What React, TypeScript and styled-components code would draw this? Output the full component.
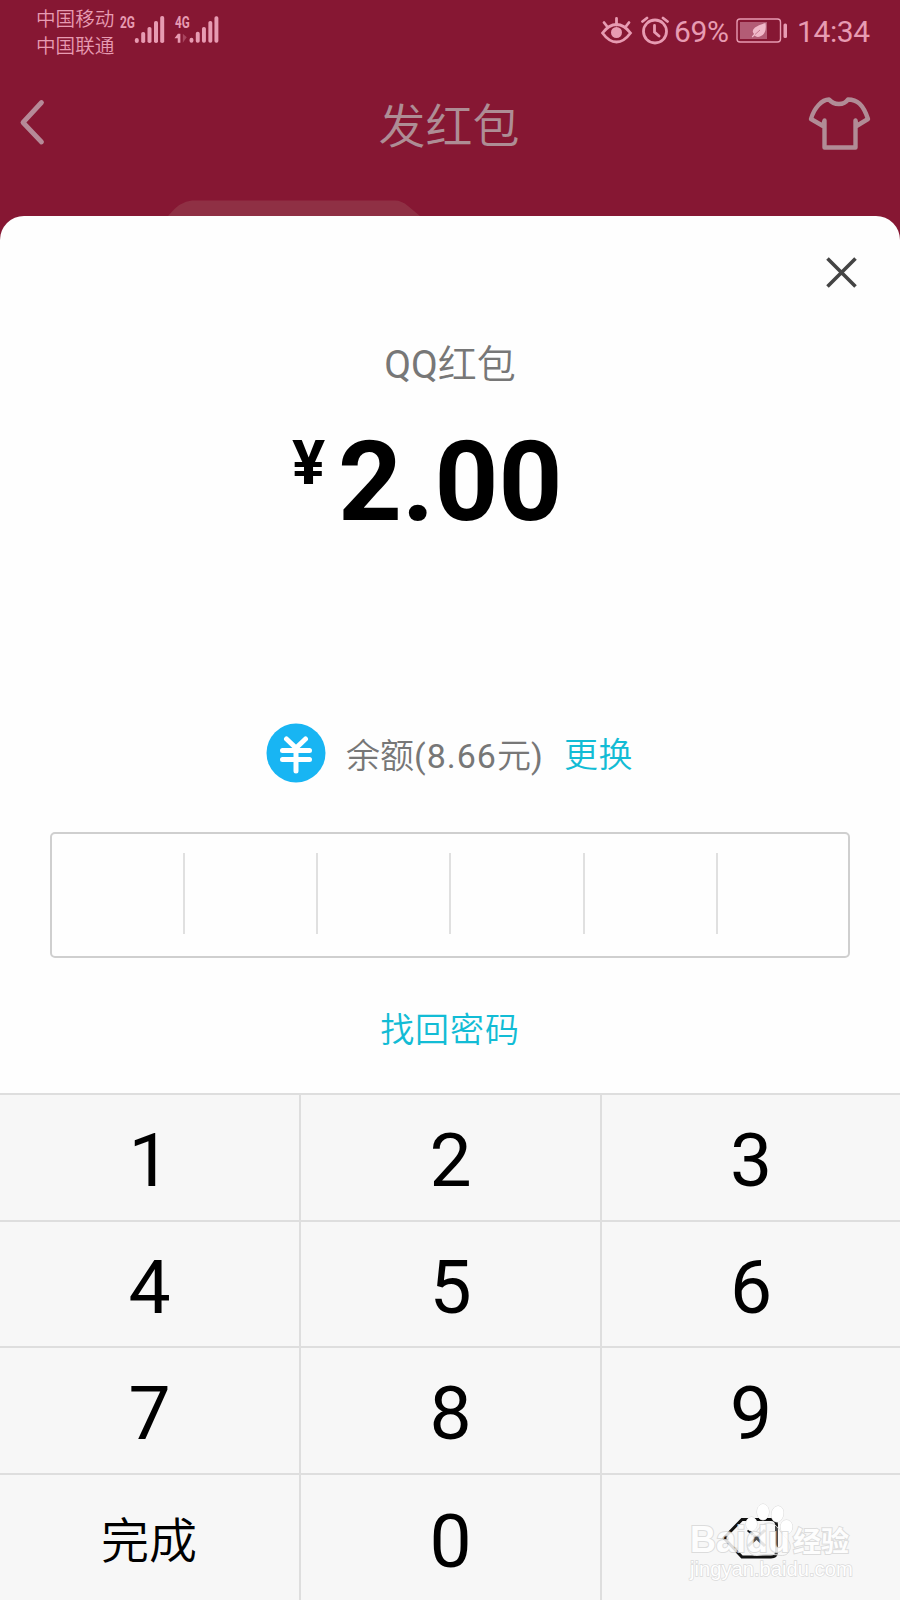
import React from "react";
import styled, { createGlobalStyle } from "styled-components";

const Global = createGlobalStyle`
  * { box-sizing: border-box; }
  html, body { margin: 0; padding: 0; }
  body { width: 900px; height: 1600px; overflow: hidden; background: #861733; font-family: Roboto, "Noto Sans CJK SC", sans-serif; }
  button { border: 0; padding: 0; margin: 0; background: none; font: inherit; color: inherit; display: block; }
  svg { display: block; }
`;

const Screen = styled.div`
  width: 900px;
  height: 1600px;
  display: flex;
  flex-direction: column;
  background: #861733;
  overflow: hidden;
`;

const StatusBar = styled.header`
  height: 62px;
  flex: none;
  display: flex;
  justify-content: space-between;
  padding: 0 30px 0 36px;
  color: #e79bb2;
`;

const StatusLeft = styled.div`
  display: flex;
`;

const Carriers = styled.div`
  padding-top: 4px;
  width: 83px;
  font: 350 19.6px/27px "Noto Sans CJK SC", sans-serif;
  white-space: nowrap;
`;

const StatusRight = styled.div`
  display: flex;
  align-items: center;
  height: 62px;
`;

const Percent = styled.span`
  font-size: 30px;
  line-height: 62px;
  width: 67px;
  padding: 2px 0 0 5px;
  white-space: nowrap;
  letter-spacing: -0.4px;
`;

const Clock = styled.span`
  font-size: 30px;
  line-height: 62px;
  width: 73px;
  margin-left: 8px;
  padding-top: 2px;
  white-space: nowrap;
  letter-spacing: -0.4px;
`;

const NavBar = styled.nav`
  height: 124px;
  flex: none;
  display: grid;
  grid-template-columns: 100px 1fr 100px;
  align-items: center;
`;

const Title = styled.h1`
  margin: 0;
  text-align: center;
  font: 350 47px/122px "Noto Sans CJK SC", sans-serif;
  color: #ae8d95;
  padding: 0 2px 2px 0;
`;

const NavButton = styled.button<{ $align: "start" | "end" }>`
  display: flex;
  justify-content: ${(p) => (p.$align === "start" ? "flex-start" : "flex-end")};
  padding: ${(p) => (p.$align === "start" ? "0 0 0 16px" : "0 27px 1px 0")};
`;

const Behind = styled.div`
  height: 30px;
  flex: none;
  padding: 14px 0 0 168px;
`;

const Sheet = styled.main`
  flex: none;
  height: 1384px;
  display: flex;
  flex-direction: column;
  background: #fefefe;
  border-radius: 24px 24px 0 0;
  overflow: hidden;
`;

const CloseRow = styled.div`
  height: 113px;
  flex: none;
  display: flex;
  justify-content: flex-end;
  padding: 38px 41px 0 0;
`;

const CloseButton = styled.button`
  align-self: flex-start;
  height: 36px;
`;

const Subject = styled.div`
  height: 72px;
  flex: none;
  text-align: center;
  font: 350 39px/72px Roboto, "Noto Sans CJK SC", sans-serif;
  color: #777;
`;

const Amount = styled.div`
  height: 307px;
  flex: none;
  display: flex;
  align-items: flex-start;
  padding: 0 0 0 292px;
  font-weight: 700;
  color: #000;
`;

const Currency = styled.span`
  font-size: 62px;
  line-height: 72px;
  margin-top: 26px;
  width: 46px;
`;

const Value = styled.span`
  font-size: 111.6px;
  line-height: 132px;
  margin-top: 15px;
`;

const Method = styled.div`
  height: 90px;
  flex: none;
  display: flex;
  align-items: center;
  padding-left: 266px;
  font-size: 34px;
  white-space: nowrap;
`;

const Balance = styled.span`
  width: 218px;
  margin-left: 20px;
  color: #777;
  font-weight: 350;
`;

const Latin = styled.span<{ $spacing?: number }>`
  font-weight: 400;
  letter-spacing: ${(p) => p.$spacing ?? 0}px;
`;

const Link = styled.button<{ $spacing: number }>`
  font: 350 34px/50px "Noto Sans CJK SC", sans-serif;
  letter-spacing: ${(p) => p.$spacing}px;
  color: #12bcd5;
`;

const Code = styled.div`
  flex: none;
  height: 126px;
  margin: 34px 50px 0;
  border: 2px solid #cfcfcf;
  border-radius: 5px;
  display: grid;
  grid-template-columns: 130.500px repeat(4, 133.400px) 1fr;
  padding: 19px 0 22px;
`;

const CodeCell = styled.div`
  & + & {
    border-left: 2px solid #e0e0e0;
  }
`;

const Recover = styled.div`
  height: 135px;
  flex: none;
  display: flex;
  justify-content: center;
  align-items: flex-start;
  padding-top: 45px;
`;

const Keypad = styled.div`
  flex: none;
  height: 509px;
  display: grid;
  grid-template-columns: 301px 301px 298px;
  grid-template-rows: 127px 126px 127px 129px;
  background: #f7f7f7;
`;

const Key = styled.button<{ $word?: boolean }>`
  display: flex;
  justify-content: center;
  align-items: center;
  border-top: 2px solid #dedede;
  border-right: 2px solid #dedede;
  color: #000;
  font-weight: ${(p) => (p.$word ? 350 : 400)};
  font-size: ${(p) => (p.$word ? 48 : 75)}px;
  padding: ${(p) => (p.$word ? "0 1px 4px 0" : "5px 0 0")};
  &:nth-child(3n) {
    border-right: 0;
  }
`;

const EraseKey = styled(Key)`
  position: relative;
  padding: 0;
`;

const Watermark = styled.div`
  position: absolute;
  left: 88px;
  top: 24px;
  width: 176px;
  height: 90px;
  color: #fff;
  paint-order: stroke fill;
`;

const Brand = styled.div`
  position: absolute;
  left: 0;
  top: 25px;
  height: 32px;
  display: flex;
  align-items: center;
  white-space: nowrap;
  -webkit-text-stroke: 2px #d8d8d8;
  opacity: 0.85;
`;

const BrandLatin = styled.span`
  font: 700 36px/32px "Liberation Sans", sans-serif;
  width: 103px;
`;

const BrandHan = styled.span`
  font: 700 28px/32px "Noto Sans CJK SC", sans-serif;
`;

const Site = styled.div`
  position: absolute;
  left: 0;
  top: 60px;
  font: 400 20.2px/20px "Liberation Sans", sans-serif;
  -webkit-text-stroke: 1.4px #dadada;
`;

const Paw = styled.svg`
  position: absolute;
  left: 54px;
  top: 2px;
`;

const Signal = ({ label, sub }: { label: string; sub?: boolean }) => (
  <svg width={sub ? 54 : 55} height="50" viewBox="0 0 55 50" fill="currentColor">
    <text x="1" y="28" fontFamily="Roboto, sans-serif" fontWeight="700" fontSize="16.5" textLength="15" lengthAdjust="spacingAndGlyphs">
      {label}
    </text>
    {sub && (
      <>
        <path d="M0.500 38.500 4 34H6.500V43H3.800V38.500Z" />
        <path d="M9 34 13 37.500 9 43Z" opacity=".35" />
      </>
    )}
    <rect x="15.800" y="38" width="4" height="5" rx="2" />
    <rect x="22.200" y="32" width="4" height="11" rx="1.800" />
    <rect x="28.500" y="27" width="4" height="16" rx="1.800" />
    <rect x="35" y="21" width="4" height="22" rx="1.800" />
    <rect x="41.200" y="16" width="4" height="27" rx="1.800" />
  </svg>
);

const EyeIcon = () => (
  <svg width="40" height="62" viewBox="0 0 40 62" fill="none" stroke="currentColor" strokeWidth="2.800" strokeLinecap="round">
    <path d="M1.500 33Q8 24.500 15.500 24.500T29.500 33Q23 42 15.500 42T1.500 33Z" />
    <circle cx="15.500" cy="32.500" r="5.500" fill="currentColor" stroke="none" />
    <path d="M15.500 18.500V25M3 22.500 6.500 27M28 22.500 24.500 27" />
  </svg>
);

const AlarmIcon = () => (
  <svg width="28" height="62" viewBox="0 0 28 62" fill="none" stroke="currentColor" strokeWidth="2.800" strokeLinecap="round">
    <circle cx="14" cy="31.500" r="11.500" />
    <path d="M13.500 25.500V32L18 36M1.500 21.500 6 18M26.500 21.500 22 18" />
  </svg>
);

const BatteryIcon = () => (
  <svg width="53" height="62" viewBox="0 0 53 62">
    <rect x="1" y="19" width="43.500" height="23" rx="3" fill="none" stroke="#e79bb2" strokeWidth="1.400" />
    <rect x="4" y="22" width="27" height="17" fill="#b35c75" />
    <path d="M29.500 23Q31 33 25 36Q21 38 18.500 35.500L16.500 37.500L15.800 36.500L18 34Q15 31 19 27.500Q23 24.500 29.500 23Z" fill="#f0b8c8" />
    <path d="M19 34.500 24 30" stroke="#b35c75" strokeWidth=".7" />
    <rect x="47.500" y="23.500" width="3.500" height="14.500" rx="1.500" fill="#e79bb2" />
  </svg>
);

const KEYS = ["1", "2", "3", "4", "5", "6", "7", "8", "9"];

export default function App() {
  return (
    <>
      <Global />
      <Screen>
        <StatusBar>
          <StatusLeft>
            <Carriers>
              <div>中国移动</div>
              <div>中国联通</div>
            </Carriers>
            <Signal label="2G" />
            <Signal label="4G" sub />
          </StatusLeft>
          <StatusRight>
            <EyeIcon />
            <AlarmIcon />
            <Percent>69%</Percent>
            <BatteryIcon />
            <Clock>14:34</Clock>
          </StatusRight>
        </StatusBar>
        <NavBar>
          <NavButton $align="start" aria-label="返回">
            <svg width="30" height="52" viewBox="0 0 30 52" fill="none" stroke="#b68a98" strokeWidth="4.800" strokeLinecap="round" strokeLinejoin="round">
              <path d="M25.500 4.500 7 24.500 25.500 44" />
            </svg>
          </NavButton>
          <Title>发红包</Title>
          <NavButton $align="end" aria-label="装扮">
            <svg width="68" height="58" viewBox="0 0 68 58" fill="none" stroke="#b18c96" strokeWidth="4.400" strokeLinejoin="round">
              <path d="M24 4.500 C29 10.500 39 10.500 43 4.500 C52 4.500 58 9 63 24 L51.500 31 L50.500 25.500 V52.500 H19.500 V25.500 L18 31 L6 24 C9 13 17 4.500 24 4.500Z" />
            </svg>
          </NavButton>
        </NavBar>
        <Behind>
          <svg width="256" height="16" viewBox="0 0 256 16">
            <path d="M0 16Q12 1 24 0.500H226Q233 0 240 6L252 16Z" fill="#8f3044" />
          </svg>
        </Behind>
        <Sheet>
          <CloseRow>
            <CloseButton aria-label="关闭">
              <svg width="36" height="36" viewBox="0 0 36 36" stroke="#444" strokeWidth="3.600" fill="none">
                <path d="M4.500 4.500 32.500 32.500M32.500 4.500 4.500 32.500" />
              </svg>
            </CloseButton>
          </CloseRow>
          <Subject>
            <Latin>QQ</Latin>红包
          </Subject>
          <Amount>
            <Currency>¥</Currency>
            <Value>2.00</Value>
          </Amount>
          <Method>
            <svg width="60" height="60" viewBox="0 0 60 60" fill="none" stroke="#fff" strokeWidth="5" strokeLinecap="round">
              <circle cx="30" cy="30" r="29.500" fill="#18b5f3" stroke="none" />
              <path d="M20.500 16 30 25 39.500 16M16.500 27.500H43.500M16.500 36.500H43.500M30 26V48" />
            </svg>
            <Balance>
              余额<Latin $spacing={1}>(8.66</Latin>元<Latin>)</Latin>
            </Balance>
            <Link $spacing={0.5}>更换</Link>
          </Method>
          <Code>
            {[0, 1, 2, 3, 4, 5].map((i) => (
              <CodeCell key={i} />
            ))}
          </Code>
          <Recover>
            <Link $spacing={0.9}>找回密码</Link>
          </Recover>
          <Keypad>
            {KEYS.map((k) => (
              <Key key={k}>{k}</Key>
            ))}
            <Key $word>完成</Key>
            <Key>0</Key>
            <EraseKey as="div">
              <svg width="60" height="44" viewBox="0 0 60 44" fill="none" stroke="#111" strokeWidth="3">
                <path d="M21 2.500H50Q55.500 2.500 55.500 8V34.500Q55.500 40 50 40H21L3 21Z" />
                <path d="M27 13 44 29M44 13 27 29" />
              </svg>
              <Watermark>
                <Paw width="60" height="62" viewBox="0 0 60 62" fill="#fff" stroke="#d8d8d8">
                  <path d="M25 22C16 22 14 31 7 36C0 42 3 55 13 54.500C20 53 30 53 37 54.500C47 55 49 43 42 37C35 31 34 22 25 22Z" fillOpacity=".25" />
                  <ellipse cx="19" cy="11" rx="6" ry="8" />
                  <ellipse cx="33.500" cy="13" rx="6" ry="8" transform="rotate(12 33.500 13)" />
                  <ellipse cx="7.500" cy="23" rx="5.500" ry="7" />
                  <ellipse cx="42.500" cy="26" rx="6" ry="7" />
                </Paw>
                <Brand>
                  <BrandLatin>Baidu</BrandLatin>
                  <BrandHan>经验</BrandHan>
                </Brand>
                <Site>jingyan.baidu.com</Site>
              </Watermark>
            </EraseKey>
          </Keypad>
        </Sheet>
      </Screen>
    </>
  );
}
